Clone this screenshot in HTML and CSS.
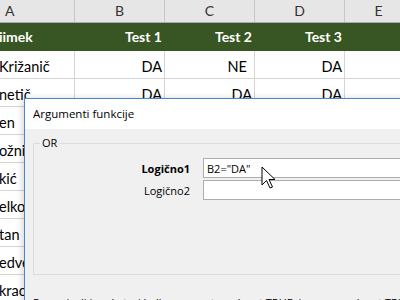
FILE: index.html
```html
<!DOCTYPE html>
<html lang="sl">
<head>
    <meta charset="UTF-8">
    <title>Argumenti funkcije</title>
    <link rel="stylesheet" href="styles.css">
</head>
<body>

    <!-- Worksheet behind the dialog -->
    <div class="sheet">
        <div class="row col-heads">
            <div class="ch ch-a">A</div>
            <div class="ch">B</div>
            <div class="ch">C</div>
            <div class="ch">D</div>
            <div class="ch">E</div>
            <div class="ch"></div>
        </div>
        <div class="row head-row">
            <div class="cell name">iimek</div>
            <div class="cell num">Test 1</div>
            <div class="cell num">Test 2</div>
            <div class="cell num">Test 3</div>
            <div class="cell"></div>
            <div class="cell"></div>
        </div>
        <div class="row">
            <div class="cell name">Križanič</div>
            <div class="cell num">DA</div>
            <div class="cell num pad-ne">NE</div>
            <div class="cell num">DA</div>
            <div class="cell"></div>
            <div class="cell"></div>
        </div>
        <div class="row">
            <div class="cell name">netič</div>
            <div class="cell num">DA</div>
            <div class="cell num">DA</div>
            <div class="cell num">DA</div>
            <div class="cell"></div>
            <div class="cell"></div>
        </div>
        <div class="row"><div class="cell name">en</div><div class="cell"></div><div class="cell"></div><div class="cell"></div><div class="cell"></div><div class="cell"></div></div>
        <div class="row"><div class="cell name">ožnik</div><div class="cell"></div><div class="cell"></div><div class="cell"></div><div class="cell"></div><div class="cell"></div></div>
        <div class="row"><div class="cell name">kić</div><div class="cell"></div><div class="cell"></div><div class="cell"></div><div class="cell"></div><div class="cell"></div></div>
        <div class="row"><div class="cell name">elkovič</div><div class="cell"></div><div class="cell"></div><div class="cell"></div><div class="cell"></div><div class="cell"></div></div>
        <div class="row"><div class="cell name">tan</div><div class="cell"></div><div class="cell"></div><div class="cell"></div><div class="cell"></div><div class="cell"></div></div>
        <div class="row"><div class="cell name">edved</div><div class="cell"></div><div class="cell"></div><div class="cell"></div><div class="cell"></div><div class="cell"></div></div>
        <div class="row"><div class="cell name">kracer</div><div class="cell"></div><div class="cell"></div><div class="cell"></div><div class="cell"></div><div class="cell"></div></div>
    </div>

    <!-- Function arguments dialog -->
    <div class="dialog">
        <div class="dialog-title">Argumenti funkcije</div>
        <div class="dialog-body">
            <fieldset class="group">
                <legend>OR</legend>
                <div class="arg-grid">
                    <label class="arg-label bold" for="arg1">Logično1</label>
                    <input type="text" id="arg1" class="arg-input" value="B2=&quot;DA&quot;">
                    <label class="arg-label" for="arg2">Logično2</label>
                    <input type="text" id="arg2" class="arg-input" value="">
                </div>
            </fieldset>
            <p class="desc">Preveri, ali ima kateri koli argument vrednost TRUE, in vrne vrednost TRUE ali FALSE.</p>
        </div>
    </div>

    <!-- mouse pointer -->
    <svg class="pointer" width="16" height="25" viewBox="0 0 16 25">
        <path d="M1 1 L1 19 L5.5 14.5 L9 22 L11.5 21 L8 13.5 L14 13.5 Z" fill="#fff" stroke="#000" stroke-width="1" stroke-linejoin="miter"/>
    </svg>

</body>
</html>
```

FILE: styles.css
```css
html, body {
    margin: 0;
    padding: 0;
    width: 400px;
    height: 300px;
    overflow: hidden;
    background-color: #fff;
}

body {
    position: relative;
    font-family: Lato, "Open Sans", sans-serif;
}

.sheet {
    width: 440px;
}

.row {
    display: grid;
    grid-template-columns: 75px 90px 90px 90px 68px 60px;
    height: 28px;
}

.cell {
    box-sizing: border-box;
    height: 28px;
    border-right: 1px solid #d4d4d4;
    border-bottom: 1px solid #d4d4d4;
    font-size: 14.5px;
    color: #000;
    line-height: 27px;
    padding-top: 2px;
    white-space: nowrap;
}

.cell.num {
    text-align: right;
    padding-right: 2px;
}

.cell.pad-ne {
    padding-right: 7px;
}

.cell.name {
    text-indent: -1px;
}

/* column letters */
.col-heads {
    height: 23px;
    background-color: #e6e6e6;
    border-bottom: 1px solid #ababab;
    box-sizing: border-box;
}

.ch {
    box-sizing: border-box;
    border-right: 1px solid #c6c6c6;
    text-align: center;
    font-size: 14px;
    line-height: 22px;
    color: #333;
}

.ch-a {
    text-align: left;
    padding-left: 5px;
}

/* green header row */
.head-row .cell {
    background-color: #375623;
    border-color: transparent;
    color: #fff;
    font-weight: bold;
    font-size: 14px;
    padding-top: 0;
}

/* dialog */
.dialog {
    position: absolute;
    left: 24px;
    top: 98px;
    width: 420px;
    height: 260px;
    border: 1px solid #4a86c8;
    background-color: #f0f0f0;
    font-family: "Open Sans", "Noto Sans", sans-serif;
    font-size: 11px;
    color: #000;
    box-shadow: -2px 0 6px rgba(0, 0, 0, 0.15);
}

.dialog-title {
    height: 30px;
    line-height: 30px;
    background-color: #fff;
    padding-left: 8px;
    font-size: 11.5px;
}

.dialog-body {
    padding: 6px 0 0 8px;
}

.group {
    margin: 0;
    padding: 7px 0 74px 0;
    border: 1px solid #dcdcdc;
    border-right: none;
}

.group legend {
    margin-left: 6px;
    padding: 0 2px;
    line-height: 16px;
}

.arg-grid {
    display: grid;
    grid-template-columns: 156px 1fr;
    column-gap: 13px;
    row-gap: 2px;
    align-items: center;
}

.arg-label {
    text-align: right;
}

.bold {
    font-weight: bold;
}

.arg-input {
    box-sizing: border-box;
    height: 20px;
    margin: 0;
    border: 1px solid #adadad;
    background-color: #fff;
    padding: 0 3px;
    font-family: "Open Sans", "Noto Sans", sans-serif;
    font-size: 11px;
    color: #000;
    outline: none;
}

.desc {
    margin: 20px 0 0 0;
    line-height: 16px;
    white-space: nowrap;
}

.pointer {
    position: absolute;
    left: 261px;
    top: 166px;
}
```
